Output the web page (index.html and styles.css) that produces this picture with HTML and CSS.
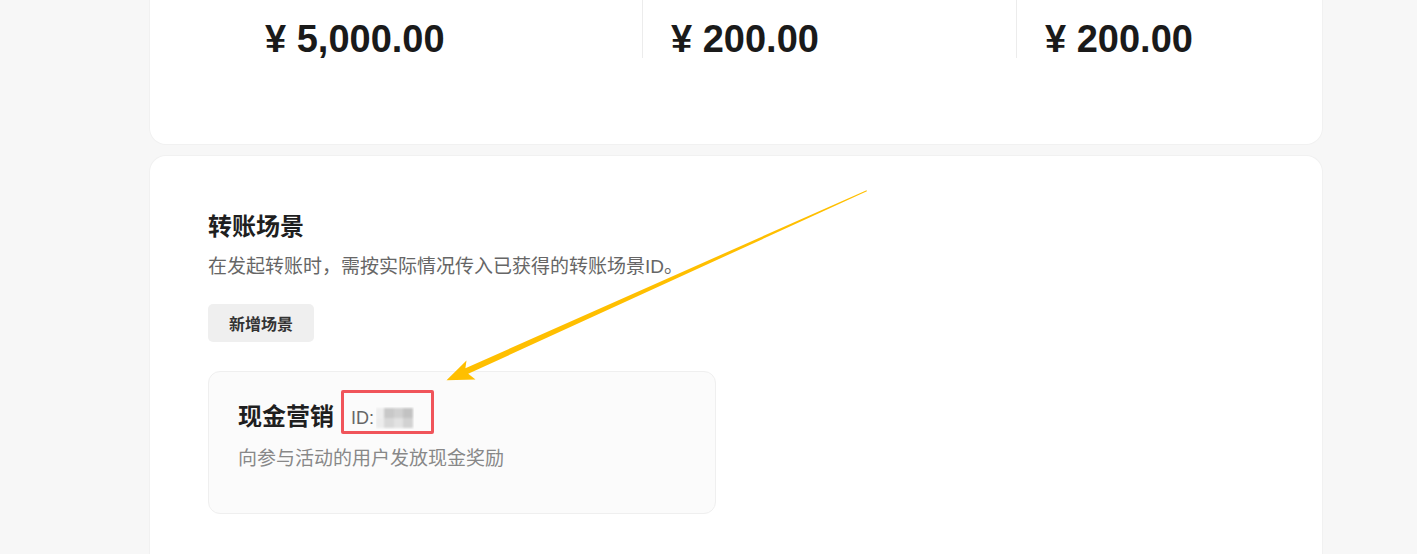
FILE: index.html
```html
<!DOCTYPE html>
<html lang="zh-CN">
<head>
<meta charset="utf-8">
<title>转账场景</title>
<link rel="stylesheet" href="styles.css">
</head>
<body>
<div class="page">
  <section class="card summary">
    <div class="stat first"><div class="amount">¥ 5,000.00</div></div>
    <div class="stat"><div class="amount">¥ 200.00</div></div>
    <div class="stat last"><div class="amount">¥ 200.00</div></div>
  </section>

  <section class="card scenes">
    <h2 class="title">转账场景</h2>
    <p class="desc">在发起转账时，需按实际情况传入已获得的转账场景ID。</p>
    <button class="btn">新增场景</button>

    <div class="scene">
      <div class="scene-head">
        <span class="scene-name">现金营销</span>
        <span class="scene-id">ID:<svg class="blur" width="38" height="22" viewBox="0 0 38 22">
            <defs><filter id="b" x="-20%" y="-20%" width="140%" height="140%"><feGaussianBlur stdDeviation="0.9"/></filter></defs>
            <g filter="url(#b)">
              <rect x="0" y="1" width="8" height="10" fill="#eeeeee"/>
              <rect x="8" y="1" width="10" height="10" fill="#c8c8c8"/>
              <rect x="18" y="1" width="9" height="10" fill="#d0d0d0"/>
              <rect x="27" y="1" width="10" height="10" fill="#c2c2c2"/>
              <rect x="0" y="11" width="8" height="10" fill="#ececec"/>
              <rect x="8" y="11" width="10" height="10" fill="#d8d8d8"/>
              <rect x="18" y="11" width="9" height="10" fill="#e2e2e2"/>
              <rect x="27" y="11" width="10" height="10" fill="#d2d2d2"/>
            </g>
          </svg><span class="mark"></span></span>
      </div>
      <p class="scene-desc">向参与活动的用户发放现金奖励</p>
    </div>
  </section>
</div>

<svg class="arrow" width="1417" height="554" viewBox="0 0 1417 554">
  <polygon fill="#ffbf00" points="866.9,191.3 468.2,373.8 475.5,379.5 446.5,380.3 466.5,360.5 465.4,368.2 866.6,190.2"/>
</svg>
</body>
</html>
```

FILE: styles.css
```css
html, body {
  margin: 0;
  padding: 0;
}
body {
  background: #f7f7f7;
  font-family: "Liberation Sans", "Noto Sans CJK SC", sans-serif;
  color: #1f1f1f;
  overflow: hidden;
}
.page {
  width: 1172px;
  margin: -40px 0 0 150px;
  display: flex;
  flex-direction: column;
  gap: 12px;
}
.card {
  background: #fff;
  border-radius: 16px;
  box-shadow: 0 0 0 1px #f1f1f1;
}
.summary {
  display: flex;
  padding: 0 0 86px 115px;
}
.stat {
  flex: 0 0 auto;
  width: 345px;
  padding-top: 60px;
  padding-left: 28px;
  border-left: 1px solid #ececec;
}
.stat.first {
  width: 377px;
  padding-left: 0;
  border-left: none;
}
.stat.last {
  flex: 1 1 auto;
  width: auto;
  min-width: 0;
}
.amount {
  font-size: 38px;
  line-height: 38px;
  font-weight: 700;
  color: #1a1a1a;
  white-space: nowrap;
}
.scenes {
  padding: 55px 58px 60px;
  height: 400px;
}
.title {
  margin: 0;
  font-size: 24px;
  line-height: 32px;
  font-weight: 700;
  color: #1f1f1f;
}
.desc {
  margin: 10px 0 0;
  font-size: 19px;
  line-height: 28px;
  color: #666;
}
.btn {
  margin-top: 23px;
  height: 38px;
  padding: 0 21px;
  border: none;
  border-radius: 5px;
  background: #efefef;
  font-family: inherit;
  font-size: 16px;
  font-weight: 700;
  color: #333;
}
.scene {
  margin-top: 29px;
  width: 448px;
  padding: 29px 29px 40px;
  background: #fbfbfb;
  border: 1px solid #efefef;
  border-radius: 12px;
}
.scene-head {
  display: flex;
  align-items: center;
  gap: 17px;
  height: 32px;
}
.scene-name {
  font-size: 24px;
  line-height: 32px;
  font-weight: 700;
  color: #1f1f1f;
}
.scene-id {
  position: relative;
  display: flex;
  align-items: center;
  gap: 2px;
  font-size: 18px;
  color: #666;
  margin-top: 2px;
}
.blur {
  display: block;
}
.mark {
  position: absolute;
  left: -10px;
  top: -17px;
  width: 87px;
  height: 38px;
  border: 3px solid #f0545a;
  border-radius: 2px;
}
.scene-desc {
  margin: 12px 0 0;
  font-size: 19px;
  line-height: 28px;
  color: #888;
}
.arrow {
  position: absolute;
  left: 0;
  top: 0;
  pointer-events: none;
}
```
